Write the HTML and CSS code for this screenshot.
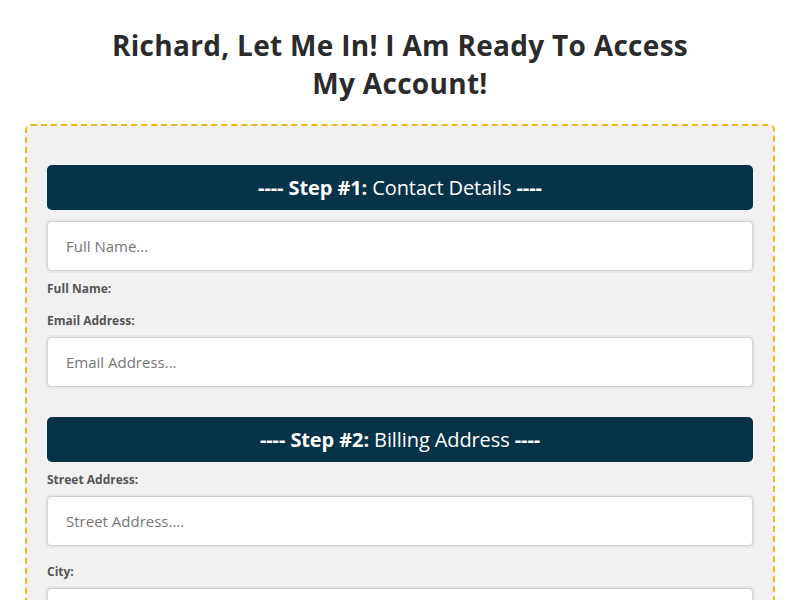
FILE: index.html
```html
<!DOCTYPE html>
<html lang="en">
<head>
<meta charset="utf-8">
<title>Account Access</title>
<link rel="stylesheet" href="styles.css">
</head>
<body>
<h1 class="page-title">Richard, Let Me In! I Am Ready To Access<br>My Account!</h1>
<form class="form-box">
  <h3 class="step-title"><strong>---- Step #1:</strong> Contact Details <strong>----</strong></h3>
  <input class="text-input" type="text" placeholder="Full Name...">
  <label class="field-label label-after">Full Name:</label>
  <label class="field-label label-gap">Email Address:</label>
  <input class="text-input" type="email" placeholder="Email Address...">
  <h3 class="step-title step-next"><strong>---- Step #2:</strong> Billing Address <strong>----</strong></h3>
  <label class="field-label">Street Address:</label>
  <input class="text-input" type="text" placeholder="Street Address....">
  <label class="field-label label-section">City:</label>
  <input class="text-input" type="text" placeholder="City...">
</form>
</body>
</html>
```
FILE: styles.css
```css
html, body {
  margin: 0;
  padding: 0;
  background: #ffffff;
}
body {
  font-family: "Open Sans", "Noto Sans", sans-serif;
  color: #333333;
  padding: 0 25px;
}
.page-title {
  margin: 0;
  padding: 26px 0 22px;
  text-align: center;
  font-size: 28px;
  line-height: 38px;
  font-weight: 700;
  color: #2b2b2b;
  letter-spacing: 0.3px;
}
.form-box {
  display: flex;
  flex-direction: column;
  background: #f1f1f1;
  border: 2px dashed #f2b619;
  border-radius: 6px;
  padding: 39px 20px 40px;
}
.step-title {
  margin: 0 0 11px;
  height: 45px;
  line-height: 45px;
  background: #073349;
  color: #ffffff;
  border-radius: 5px;
  text-align: center;
  font-size: 20px;
  font-weight: 400;
  letter-spacing: -0.1px;
}
.step-title strong {
  font-weight: 700;
}
.step-next {
  margin-top: 30px;
  margin-bottom: 10px;
}
.text-input {
  box-sizing: border-box;
  height: 50px;
  margin: 0;
  padding: 0 18px;
  border: 1px solid #cfcfcf;
  border-radius: 4px;
  background: #ffffff;
  box-shadow: 0 0 0 2px #e6e6e6;
  font-family: inherit;
  font-size: 15px;
  color: #333;
  outline: none;
}
.text-input::placeholder {
  color: #767676;
}
.field-label {
  display: block;
  font-size: 12px;
  line-height: 16px;
  font-weight: 700;
  color: #555555;
  margin-bottom: 8px;
}
.label-after {
  margin-top: 10px;
  margin-bottom: 0;
}
.label-gap {
  margin-top: 16px;
}
.label-section {
  margin-top: 18px;
}
```
